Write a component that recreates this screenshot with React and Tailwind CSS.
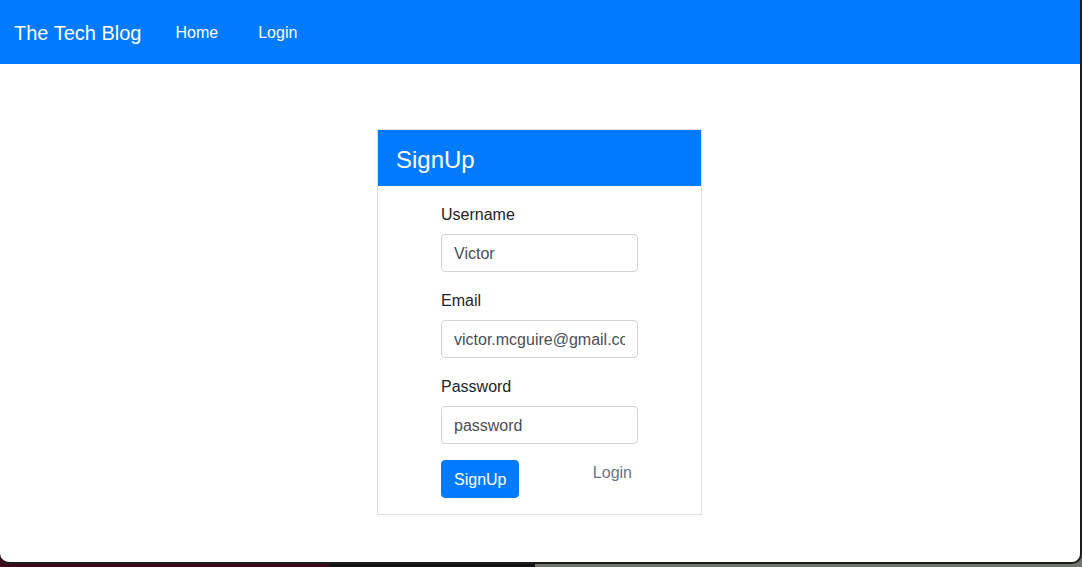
export default function App() {
  return (
    <div className="h-[567px] overflow-hidden bg-[linear-gradient(to_right,#3e0a1b_0_329px,#131313_329px_535px,#6f776b_535px)] font-['Liberation_Sans',Arial,sans-serif]">
      {/* browser window */}
      <div className="h-[564px] w-full bg-white rounded-b-[10px] border-r-2 border-b-2 border-[#1c1c1c] overflow-hidden">
        {/* navbar */}
        <nav className="h-16 bg-[#007bff] flex items-center px-[14px] pt-[1px] text-white">
          <span className="text-[20px] leading-[30px]">The Tech Blog</span>
          <a className="ml-[34px] text-[16px] leading-6">Home</a>
          <a className="ml-[40px] text-[16px] leading-6">Login</a>
        </nav>

        {/* signup card */}
        <div className="mt-[65px] ml-[377px] w-[325px] border border-[#dfdfdf]">
          <div className="h-[56px] bg-[#007bff] flex items-center px-[18px] pt-[3px]">
            <h4 className="text-[24px] leading-[29px] text-white">SignUp</h4>
          </div>

          <div className="py-4">
            <form className="w-[197px] mx-auto text-[16px] leading-6 text-[#212529]">
              <div className="mb-4">
                <label className="block pt-[1px] mb-[7px]">Username</label>
                <input
                  type="text"
                  defaultValue="Victor"
                  readOnly
                  className="block w-full h-[38px] px-3 pt-[1px] border border-[#ced4da] rounded text-[#495057] outline-none"
                />
              </div>
              <div className="mb-4">
                <label className="block pt-[1px] mb-[7px]">Email</label>
                <input
                  type="text"
                  defaultValue="victor.mcguire@gmail.com"
                  readOnly
                  className="block w-full h-[38px] px-3 pt-[1px] border border-[#ced4da] rounded text-[#495057] outline-none"
                />
              </div>
              <div className="mb-4">
                <label className="block pt-[1px] mb-[7px]">Password</label>
                <input
                  type="text"
                  defaultValue="password"
                  readOnly
                  className="block w-full h-[38px] px-3 pt-[1px] border border-[#ced4da] rounded text-[#495057] outline-none"
                />
              </div>
              <div className="flex items-start">
                <button
                  type="button"
                  className="h-[38px] px-3 pt-[1px] border border-[#007bff] bg-[#007bff] text-white rounded"
                >
                  SignUp
                </button>
                <a className="ml-auto mr-[6px] mt-[1px] text-[#6c757d]">Login</a>
              </div>
            </form>
          </div>
        </div>
      </div>
    </div>
  )
}
